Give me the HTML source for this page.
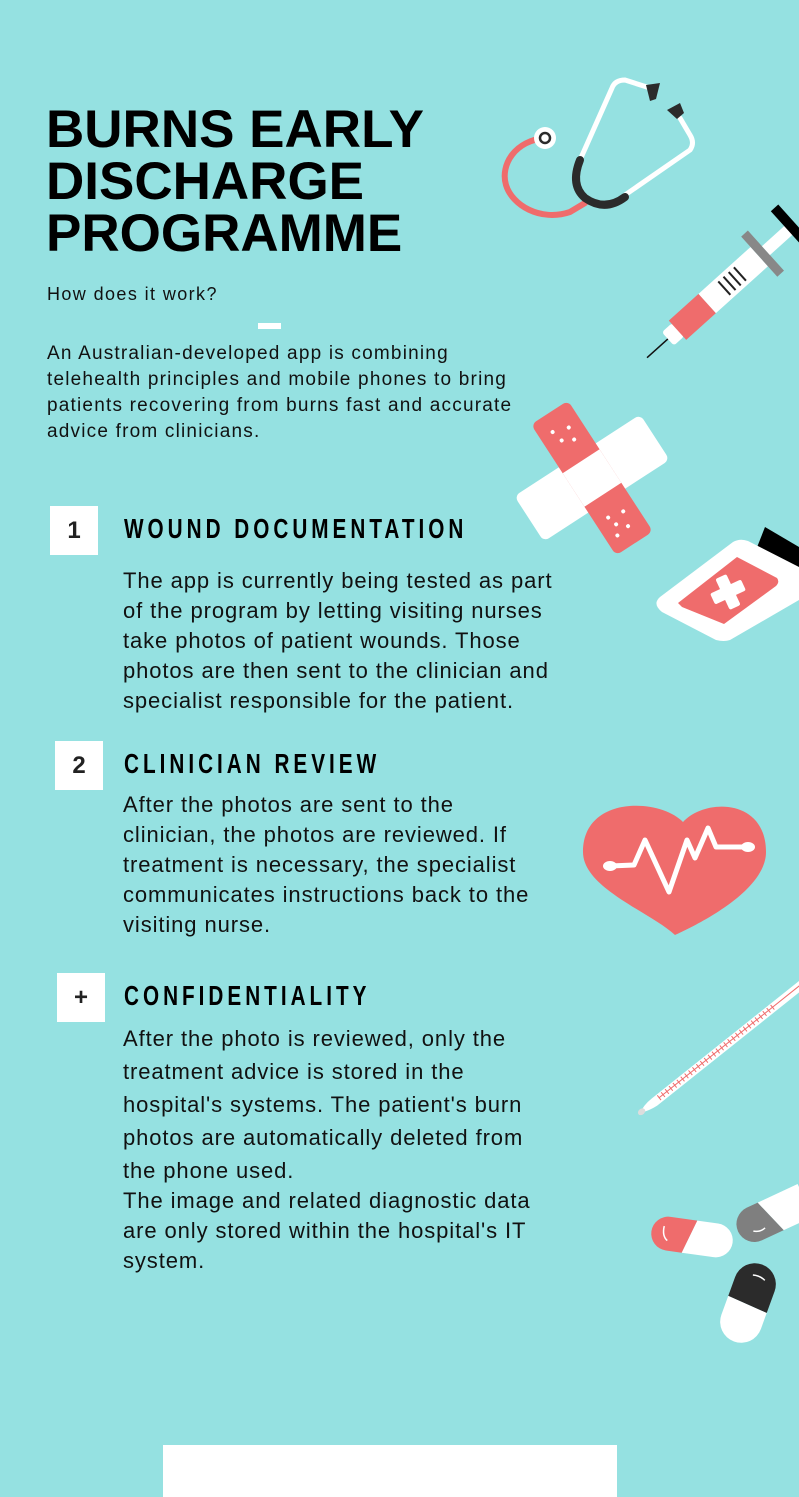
<!DOCTYPE html>
<html><head><meta charset="utf-8"><style>
html,body{margin:0;padding:0}
body{width:799px;height:1497px;background:#95e1e1;position:relative;overflow:hidden;font-family:"Liberation Sans",sans-serif;color:#111}
.t{position:absolute;left:46px;top:104px;font-weight:bold;font-size:53px;line-height:52px;letter-spacing:0px;color:#000;margin:0}
.q{position:absolute;left:47px;top:284px;font-size:18px;letter-spacing:1.4px}
.p{position:absolute;left:47px;top:341px;font-size:19px;line-height:26px;width:560px;letter-spacing:1.2px}
.box{position:absolute;width:48px;height:49px;background:#fff;font-family:"Liberation Sans Narrow","Liberation Sans",sans-serif;font-weight:bold;font-size:24px;text-align:center;line-height:49px;color:#222}
.h{position:absolute;left:124px;font-weight:bold;font-size:28px;letter-spacing:5.4px;color:#000;transform:scaleX(0.74);transform-origin:0 0;white-space:nowrap}
.b{position:absolute;left:123px;font-size:22px;line-height:30px;width:520px;color:#111;letter-spacing:0.9px}
svg{position:absolute;left:0;top:0}
</style></head><body>
<div class="t">BURNS EARLY<br>DISCHARGE<br>PROGRAMME</div>
<div class="q">How does it work?</div>
<div style="position:absolute;left:258px;top:323px;width:23px;height:6px;background:#fff"></div>
<div class="p">An Australian-developed app is combining<br>telehealth principles and mobile phones to bring<br>patients recovering from burns fast and accurate<br>advice from clinicians.</div>

<div class="box" style="left:50px;top:506px">1</div>
<div class="h" style="top:513px">WOUND DOCUMENTATION</div>
<div class="b" style="top:566px">The app is currently being tested as part<br>of the program by letting visiting nurses<br>take photos of patient wounds. Those<br>photos are then sent to the clinician and<br>specialist responsible for the patient.</div>

<div class="box" style="left:55px;top:741px">2</div>
<div class="h" style="top:748px">CLINICIAN REVIEW</div>
<div class="b" style="top:790px">After the photos are sent to the<br>clinician, the photos are reviewed. If<br>treatment is necessary, the specialist<br>communicates instructions back to the<br>visiting nurse.</div>

<div class="box" style="left:57px;top:973px">+</div>
<div class="h" style="top:980px">CONFIDENTIALITY</div>
<div class="b" style="top:1022px;line-height:33px">After the photo is reviewed, only the<br>treatment advice is stored in the<br>hospital's systems. The patient's burn<br>photos are automatically deleted from<br>the phone used.</div>
<div class="b" style="top:1186px">The image and related diagnostic data<br>are only stored within the hospital's IT<br>system.</div>

<div style="position:absolute;left:163px;top:1445px;width:454px;height:52px;background:#fff"></div>

<svg width="799" height="1497" viewBox="0 0 799 1497">
<!-- stethoscope -->
<path d="M546,138 C515,140 500,165 506,185 C512,205 540,222 570,212 L585,203" fill="none" stroke="#ef6c6c" stroke-width="6" stroke-linecap="round"/>
<path d="M650,88 L625,80 Q615,80 612,88 L580,160" fill="none" stroke="#fff" stroke-width="5" stroke-linecap="round"/>
<path d="M625,195 L690,150 Q695,143 690,135 L680,118" fill="none" stroke="#fff" stroke-width="5" stroke-linecap="round"/>
<path d="M580,160 Q570,185 585,198 Q605,212 625,197" fill="none" stroke="#2b2b2b" stroke-width="8" stroke-linecap="round"/>
<polygon points="646,85 660,83 656,99 650,101" fill="#2b2b2b"/>
<polygon points="667,110 680,103 684,113 677,119" fill="#2b2b2b"/>
<circle cx="545" cy="138" r="11" fill="#fff"/>
<circle cx="545" cy="138" r="5" fill="none" stroke="#2b2b2b" stroke-width="2.5"/>
<!-- syringe -->
<g transform="translate(650,355) rotate(-42)">
<line x1="-4" y1="0" x2="25" y2="0" stroke="#111" stroke-width="1.5"/>
<rect x="24" y="-9" width="14" height="18" rx="3" fill="#fff"/>
<rect x="37" y="-13" width="40" height="26" fill="#ef6c6c"/>
<rect x="77" y="-13" width="70" height="26" fill="#fff"/>
<line x1="100" y1="-9" x2="100" y2="9" stroke="#222" stroke-width="2"/>
<line x1="107" y1="-9" x2="107" y2="9" stroke="#222" stroke-width="2"/>
<line x1="114" y1="-9" x2="114" y2="9" stroke="#222" stroke-width="2"/>
<line x1="121" y1="-9" x2="121" y2="9" stroke="#222" stroke-width="2"/>
<rect x="147" y="-27" width="9" height="54" fill="#888"/>
<rect x="156" y="-6" width="32" height="12" fill="#fff"/>
<rect x="186" y="-26" width="10" height="60" fill="#000"/>
</g>
<!-- bandage -->
<g transform="translate(592,478)">
<rect x="-75" y="-27" width="150" height="54" rx="6" fill="#fff" transform="rotate(-33)"/>
<g transform="rotate(57)">
<rect x="-78" y="-22" width="156" height="44" rx="6" fill="#ef6c6c"/>
<rect x="-20" y="-22" width="40" height="44" fill="#fff"/>
<g fill="#fff"><circle cx="-55" cy="-8" r="2"/><circle cx="-48" cy="5" r="2"/><circle cx="-60" cy="8" r="2"/><circle cx="-42" cy="-6" r="2"/><circle cx="45" cy="-8" r="2"/><circle cx="52" cy="5" r="2"/><circle cx="60" cy="-4" r="2"/><circle cx="42" cy="8" r="2"/><circle cx="62" cy="10" r="2"/></g>
</g></g>
<!-- bottle -->
<polygon points="765,527 799,547 799,582 754,555" fill="#000"/>
<path d="M660,597 L733,542 Q740,538 748,541 L799,567 L799,600 L730,640 Q724,642 716,640 L662,612 Q652,604 660,597Z" fill="#fff"/>
<path d="M678,603 L737,557 L777,578 Q780,582 776,586 L724,624 L682,607Z" fill="#ef6c6c"/>
<g transform="translate(728,592) rotate(-25)"><rect x="-17" y="-6" width="34" height="12" rx="2" fill="#fff"/><rect x="-6" y="-17" width="12" height="34" rx="2" fill="#fff"/></g>
<!-- heart -->
<path d="M683,822 C660,798 583,795 583,852 C583,888 650,912 675,935 C690,928 766,893 766,852 C766,798 705,798 683,822Z" fill="#ef6c6c"/>
<path d="M610,866 L634,865 L645,840 L669,892 L687,840 L695,858 L708,828 L716,847 L747,847" fill="none" stroke="#fff" stroke-width="5" stroke-linejoin="round" stroke-linecap="round"/>
<ellipse cx="610" cy="866" rx="7" ry="5" fill="#fff"/><ellipse cx="748" cy="847" rx="7" ry="5" fill="#fff"/>
<!-- thermometer -->
<g transform="translate(640,1113) rotate(-38.6)">
<path d="M0,0 Q8,-4 18,-4 L220,-4 L220,5 L18,5 Q8,4 0,0Z" fill="#fff"/>
<ellipse cx="2" cy="0" rx="4" ry="3" fill="#ddd"/>
<line x1="24" y1="0" x2="220" y2="0" stroke="#ef6c6c" stroke-width="1"/>
<line x1="24" y1="0" x2="170" y2="0" stroke="#ef6c6c" stroke-width="6" stroke-dasharray="1 4"/>
</g>
<!-- pills -->
<g transform="translate(692,1237) rotate(8)">
<path d="M-24,-17 L3,-17 L-8,17 L-24,17 A17,17 0 0 1 -24,-17Z" fill="#ef6c6c"/>
<path d="M3,-17 L24,-17 A17,17 0 0 1 24,17 L-8,17Z" fill="#fff"/>
<path d="M-29,-7 Q-30,3 -24,7" fill="none" stroke="#fff" stroke-width="1.5"/>
</g>
<g transform="translate(778,1213) rotate(-25)">
<path d="M-14,-18 L-26,-18 A18,18 0 0 0 -26,18 L-2,18Z" fill="#7f7f7f"/>
<path d="M-14,-18 L30,-18 L30,18 L-2,18Z" fill="#fff"/>
<path d="M-30,6 Q-24,10 -18,8" fill="none" stroke="#fff" stroke-width="1.5"/>
</g>
<g transform="translate(748,1303) rotate(-70)">
<path d="M0,-21 L20,-21 A21,21 0 0 1 20,21 L-3,21Z" fill="#2b2b2b"/>
<path d="M0,-21 L-20,-21 A21,21 0 0 0 -20,21 L-3,21Z" fill="#fff"/>
<path d="M28,-5 Q30,2 27,8" fill="none" stroke="#fff" stroke-width="1.5"/>
</g>
</svg>
</body></html>
